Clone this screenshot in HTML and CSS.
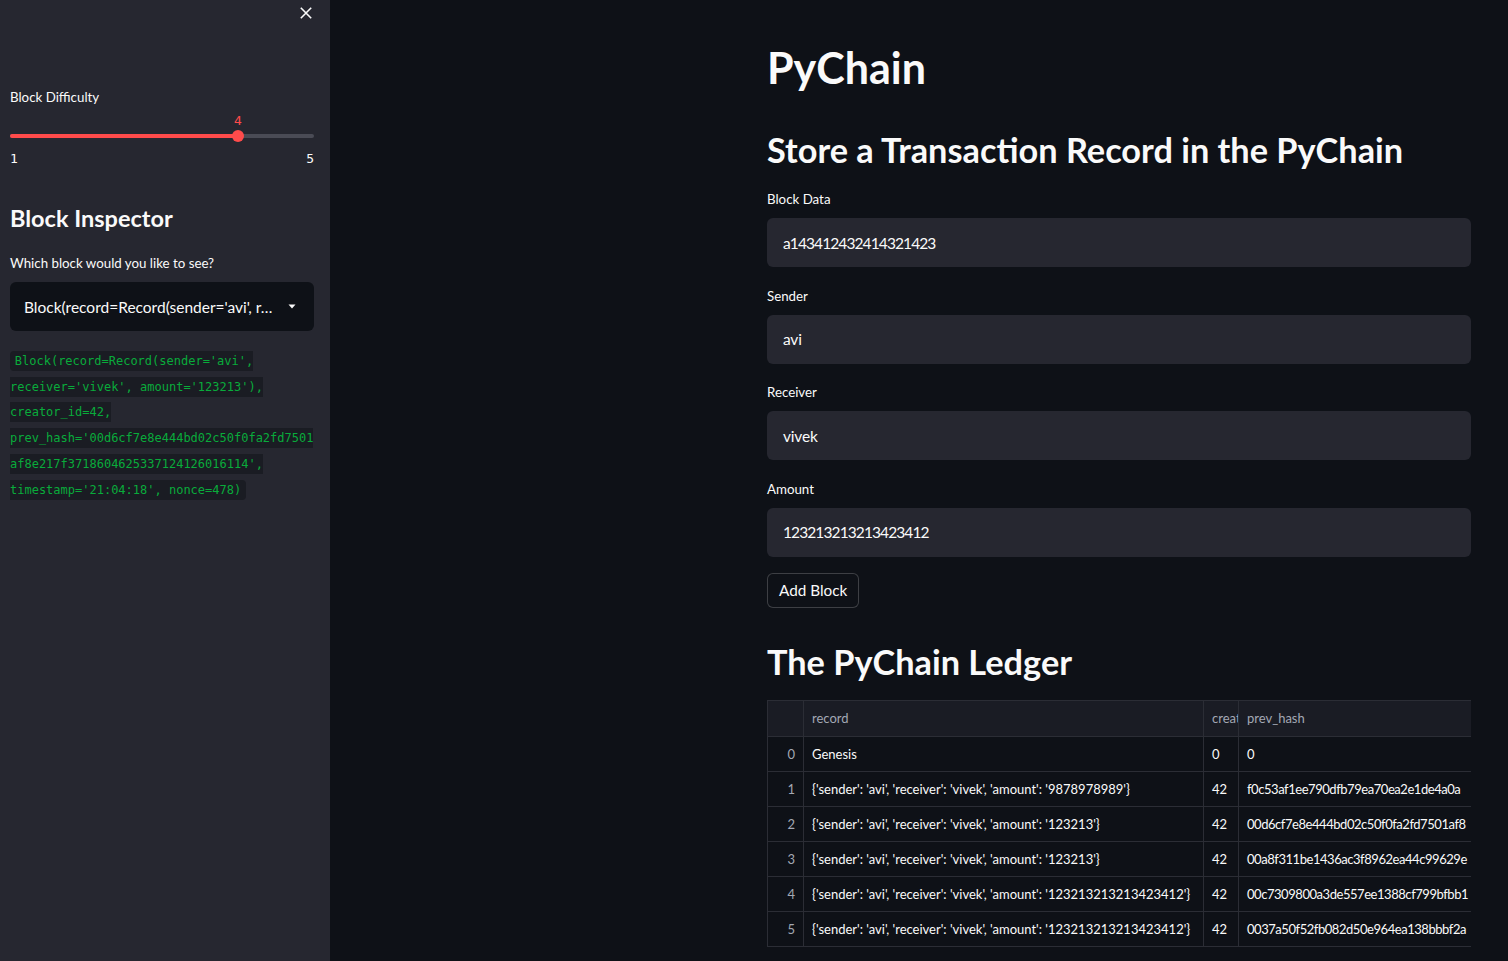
FILE: index.html
```html
<!DOCTYPE html>
<html lang="en">
<head>
<meta charset="utf-8">
<title>PyChain</title>
<link rel="stylesheet" href="styles.css">
</head>
<body>
<div class="app">
  <aside class="sidebar">
    <div class="sb-top">
      <button class="close" aria-label="Close sidebar">
        <svg width="12" height="12" viewBox="0 0 12 12"><path d="M0.8 0.8L11.2 11.2M11.2 0.8L0.8 11.2" stroke="#fafafa" stroke-width="1.6" fill="none"/></svg>
      </button>
    </div>
    <div class="sb-content">
      <div class="wlabel">Block Difficulty</div>
      <div class="slider">
        <div class="slider-track">
          <div class="slider-fill" style="width:75%"></div>
          <div class="slider-thumb" style="left:75%"><span class="thumb-value">4</span></div>
        </div>
        <div class="slider-ticks"><span>1</span><span>5</span></div>
      </div>
      <h2 class="sb-h2">Block Inspector</h2>
      <div class="wlabel">Which block would you like to see?</div>
      <div class="select">
        <span class="select-text">Block(record=Record(sender='avi', r…</span>
        <svg class="caret" width="8" height="5" viewBox="0 0 8 5"><path d="M0.5 0.5H7.5L4 4.5Z" fill="#fafafa"/></svg>
      </div>
      <p class="code-p"><code>Block(record=Record(sender='avi', <br>receiver='vivek', amount='123213'), <br>creator_id=42, <br>prev_hash='00d6cf7e8e444bd02c50f0fa2fd7501<br>af8e217f3718604625337124126016114', <br>timestamp='21:04:18', nonce=478)</code></p>
    </div>
  </aside>
  <main class="main">
    <div class="block">
      <h1 class="title">PyChain</h1>
      <h2 class="subtitle">Store a Transaction Record in the PyChain</h2>
      <div class="field">
        <div class="wlabel">Block Data</div>
        <div class="input num">a143412432414321423</div>
      </div>
      <div class="field">
        <div class="wlabel">Sender</div>
        <div class="input">avi</div>
      </div>
      <div class="field">
        <div class="wlabel">Receiver</div>
        <div class="input">vivek</div>
      </div>
      <div class="field field-last">
        <div class="wlabel">Amount</div>
        <div class="input num">123213213213423412</div>
      </div>
      <button class="btn">Add Block</button>
      <h2 class="subtitle ledger">The PyChain Ledger</h2>
      <div class="grid">
        <table>
          <colgroup>
            <col class="c-idx"><col class="c-rec"><col class="c-cre"><col class="c-prev">
          </colgroup>
          <thead>
            <tr><th></th><th>record</th><th class="clip">creat</th><th>prev_hash</th></tr>
          </thead>
          <tbody>
            <tr><td class="idx">0</td><td>Genesis</td><td>0</td><td>0</td></tr>
            <tr><td class="idx">1</td><td>{'sender': 'avi', 'receiver': 'vivek', 'amount': '9878978989'}</td><td>42</td><td class="hash">f0c53af1ee790dfb79ea70ea2e1de4a0a</td></tr>
            <tr><td class="idx">2</td><td>{'sender': 'avi', 'receiver': 'vivek', 'amount': '123213'}</td><td>42</td><td class="hash">00d6cf7e8e444bd02c50f0fa2fd7501af8</td></tr>
            <tr><td class="idx">3</td><td>{'sender': 'avi', 'receiver': 'vivek', 'amount': '123213'}</td><td>42</td><td class="hash">00a8f311be1436ac3f8962ea44c99629e</td></tr>
            <tr><td class="idx">4</td><td>{'sender': 'avi', 'receiver': 'vivek', 'amount': '123213213213423412'}</td><td>42</td><td class="hash">00c7309800a3de557ee1388cf799bfbb1</td></tr>
            <tr><td class="idx">5</td><td>{'sender': 'avi', 'receiver': 'vivek', 'amount': '123213213213423412'}</td><td>42</td><td class="hash">0037a50f52fb082d50e964ea138bbbf2a</td></tr>
          </tbody>
        </table>
      </div>
    </div>
  </main>
</div>
</body>
</html>
```

FILE: styles.css
```css
* { box-sizing: border-box; }

html, body {
  margin: 0;
  padding: 0;
  background: #0e1117;
  color: #fafafa;
  font-family: Lato, "Noto Sans", sans-serif;
}

.app {
  display: flex;
  min-height: 961px;
  width: 1508px;
  overflow: hidden;
}

/* ---------- Sidebar ---------- */
.sidebar {
  width: 330px;
  flex: 0 0 330px;
  background: #262730;
  min-height: 961px;
}

.sb-top {
  display: flex;
  justify-content: flex-end;
  padding: 7px 18px 0 0;
}

.close {
  display: block;
  width: 12px;
  height: 12px;
  padding: 0;
  border: 0;
  background: none;
  line-height: 0;
}

.sb-content {
  padding: 68px 16px 0 10px;
}

.wlabel {
  font-size: 13.3px;
  line-height: 20px;
  height: 20px;
  margin-bottom: 9px;
  color: #fafafa;
}

.slider {
  margin-top: 27px;
}

.slider-track {
  position: relative;
  height: 4px;
  border-radius: 2px;
  background: #4a4b55;
}

.slider-fill {
  height: 4px;
  border-radius: 2px;
  background: #ff4b4b;
}

.slider-thumb {
  position: absolute;
  top: -4px;
  width: 12px;
  height: 12px;
  margin-left: -6px;
  border-radius: 50%;
  background: #ff4b4b;
}

.thumb-value {
  position: absolute;
  left: 50%;
  top: -19px;
  transform: translateX(-50%);
  font-family: "DejaVu Sans Mono", monospace;
  font-size: 13px;
  line-height: 20px;
  color: #ff4b4b;
}

.slider-ticks {
  display: flex;
  justify-content: space-between;
  margin-top: 11px;
  font-family: "DejaVu Sans Mono", monospace;
  font-size: 13px;
  line-height: 20px;
  color: #fafafa;
}

.sb-h2 {
  margin: 34px 0 0;
  font-size: 23.5px;
  line-height: 30px;
  font-weight: 700;
}

.sb-h2 + .wlabel {
  margin-top: 20px;
}

.select {
  display: flex;
  align-items: center;
  justify-content: space-between;
  height: 49px;
  padding: 0 18px 0 14px;
  background: #0e1117;
  border-radius: 6px;
}

.select-text {
  font-size: 15.5px;
  white-space: nowrap;
  overflow: hidden;
}

.caret {
  flex: 0 0 auto;
}

.code-p {
  margin: 15px 0 0;
  font-size: 16px;
  line-height: 25.7px;
}

.code-p code {
  font-family: "DejaVu Sans Mono", monospace;
  font-size: 12px;
  line-height: 1;
  color: #09ab3b;
  background: #1a1c23;
  padding: 0.25em 0.4em;
  border-radius: 4px;
}

/* ---------- Main ---------- */
.main {
  flex: 1 1 auto;
  padding: 44px 0 0 437px;
}

.block {
  width: 704px;
}

.title {
  margin: 0;
  font-size: 43px;
  line-height: 48px;
  font-weight: 700;
}

.subtitle {
  margin: 37px 0 19px;
  font-size: 34.3px;
  line-height: 41px;
  font-weight: 700;
}

.field {
  margin-bottom: 18.67px;
}

.field-last {
  margin-bottom: 16px;
}

.input {
  height: 49px;
  display: flex;
  align-items: center;
  padding: 0 16px;
  background: #262730;
  border-radius: 6px;
  font-size: 15.5px;
  letter-spacing: -0.2px;
}

.input.num {
  letter-spacing: -0.9px;
}

.btn {
  display: block;
  height: 35px;
  padding: 0 11px;
  background: #0e1117;
  color: #fafafa;
  border: 1px solid rgba(250, 250, 250, 0.2);
  border-radius: 6px;
  font-family: inherit;
  font-size: 15.3px;
}

.ledger {
  margin-top: 33px;
  margin-bottom: 18px;
}

.grid {
  width: 704px;
  overflow: hidden;
}

table {
  width: 704px;
  table-layout: fixed;
  border-collapse: collapse;
  font-size: 13px;
  border: 1px solid #2b2d35;
}

.c-idx { width: 36px; }
.c-rec { width: 400px; }
.c-cre { width: 35px; }
.c-prev { width: 233px; }

th, td {
  border: 1px solid #2b2d35;
  padding: 0 8px;
  white-space: nowrap;
  overflow: hidden;
  text-align: left;
}

thead tr { height: 36px; }
tbody tr { height: 35px; }

th {
  background: #1a1c24;
  font-weight: 400;
  color: #a3a8b4;
}

th.clip {
  padding-right: 0;
}

td.idx {
  text-align: right;
  color: #a3a8b4;
}

td {
  color: #fafafa;
}

td.hash {
  padding-right: 0;
  letter-spacing: -0.45px;
}
```
